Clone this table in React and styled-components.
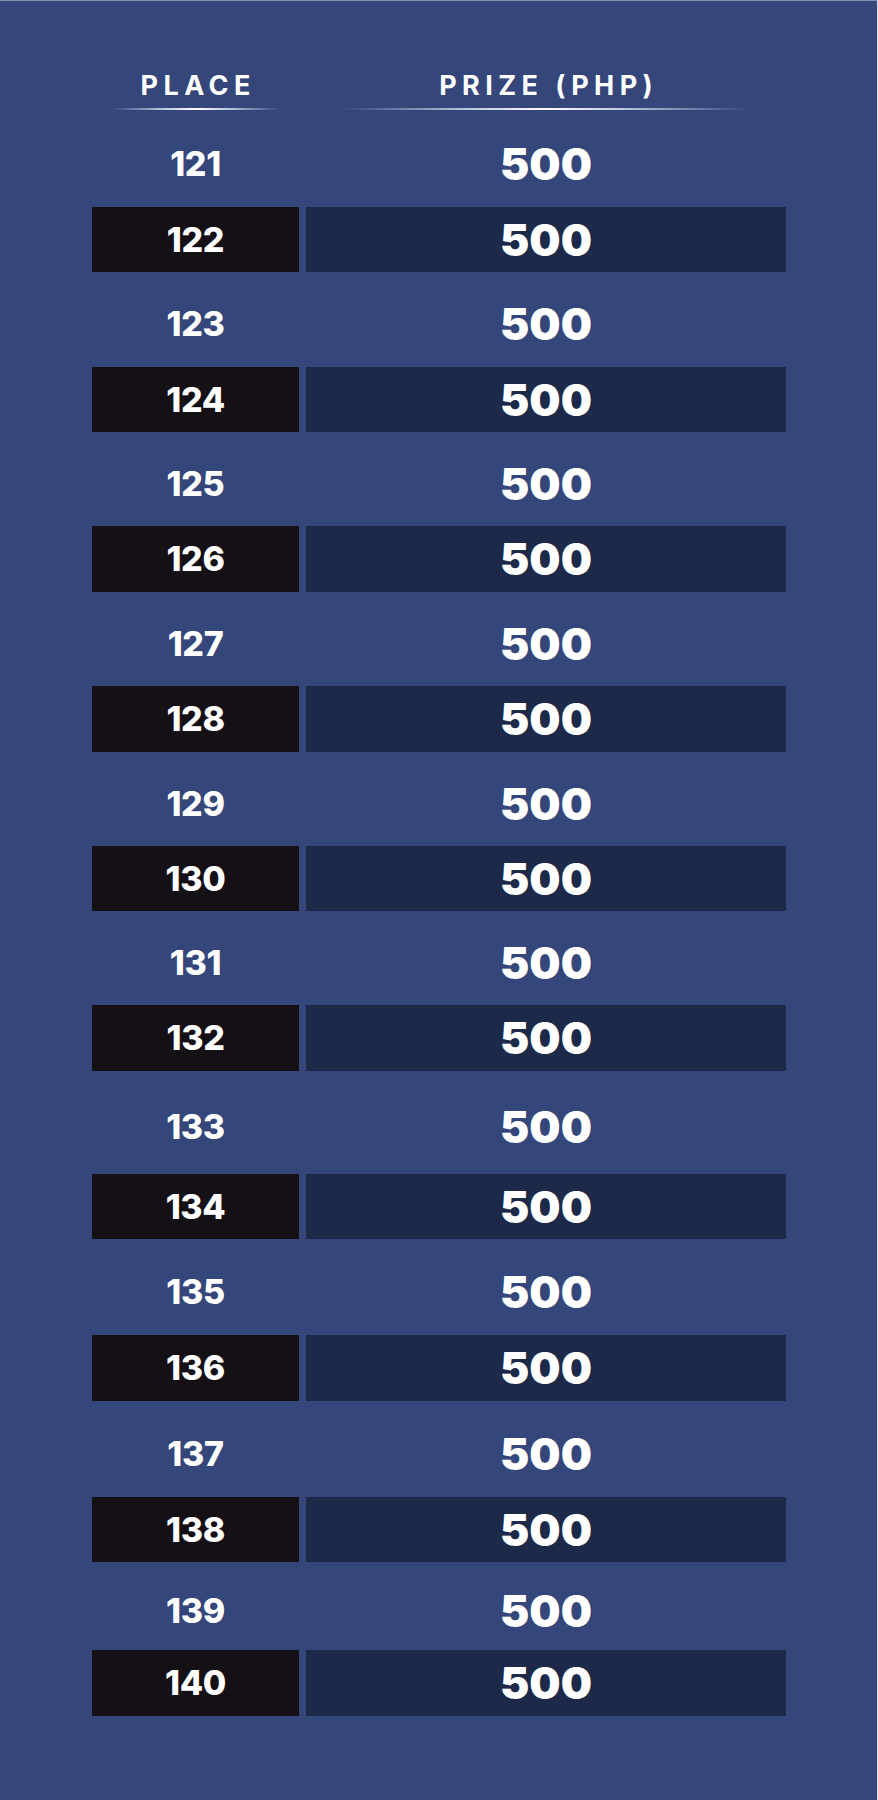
import React from "react";
import styled, { createGlobalStyle } from "styled-components";

const GlobalStyle = createGlobalStyle`
  html, body {
    margin: 0;
    padding: 0;
    background: #34467a;
  }
  * {
    box-sizing: border-box;
  }
`;

const Page = styled.div`
  width: 878px;
  min-height: 1800px;
  background: #34467a;
  border-top: 1px solid #8790ae;
  border-right: 1px solid #dfe5f2;
  padding: 69px 92px 84px 92px;
  font-family: Inter, "Open Sans", "Liberation Sans", sans-serif;
  color: #ffffff;
`;

const Grid = styled.div`
  display: grid;
  grid-template-columns: 207px 480px;
  column-gap: 7px;
`;

const HeadCell = styled.div`
  display: flex;
  flex-direction: column;
  align-items: center;
  height: 42px;
`;

const HeadText = styled.div`
  font-size: 27px;
  font-weight: 700;
  line-height: 32px;
  letter-spacing: 0.2em;
  margin-right: -0.2em;
`;

const HeadLine = styled.div`
  width: ${(p) => p.$width}px;
  height: 2px;
  margin-top: 6px;
  background: linear-gradient(
    90deg,
    rgba(255, 255, 255, 0) 0%,
    rgba(220, 226, 245, 0.8) 30%,
    rgba(255, 255, 255, 1) 50%,
    rgba(220, 226, 245, 0.8) 70%,
    rgba(255, 255, 255, 0) 100%
  );
`;

const Cell = styled.div`
  height: ${(p) => p.$height}px;
  display: flex;
  align-items: center;
  justify-content: center;
  padding-top: ${(p) => (p.$dark ? 0 : 9)}px;
  background: ${(p) => (p.$dark ? p.$bg : "transparent")};
  font-weight: 800;
  line-height: 1;
`;

const Place = styled(Cell)`
  font-size: 34px;
  letter-spacing: -0.01em;
`;

const Prize = styled(Cell)`
  font-size: 44px;
  font-weight: 900;
`;

// heights measured from the design; light rows are the gaps between the dark bars
const rows = [
  [121, 95],
  [122, 65],
  [123, 95],
  [124, 65],
  [125, 94],
  [126, 66],
  [127, 94],
  [128, 66],
  [129, 94],
  [130, 65],
  [131, 94],
  [132, 66],
  [133, 103],
  [134, 65],
  [135, 96],
  [136, 66],
  [137, 96],
  [138, 65],
  [139, 88],
  [140, 66],
];

export default function App() {
  return (
    <>
      <GlobalStyle />
      <Page>
        <Grid>
          <HeadCell>
            <HeadText>PLACE</HeadText>
            <HeadLine $width={168} />
          </HeadCell>
          <HeadCell>
            <HeadText>PRIZE (PHP)</HeadText>
            <HeadLine $width={406} />
          </HeadCell>
          {rows.map(([place, height]) => {
            const dark = place % 2 === 0;
            return (
              <React.Fragment key={place}>
                <Place $height={height} $dark={dark} $bg="#141016">
                  {place}
                </Place>
                <Prize $height={height} $dark={dark} $bg="#1c2948">
                  500
                </Prize>
              </React.Fragment>
            );
          })}
        </Grid>
      </Page>
    </>
  );
}
